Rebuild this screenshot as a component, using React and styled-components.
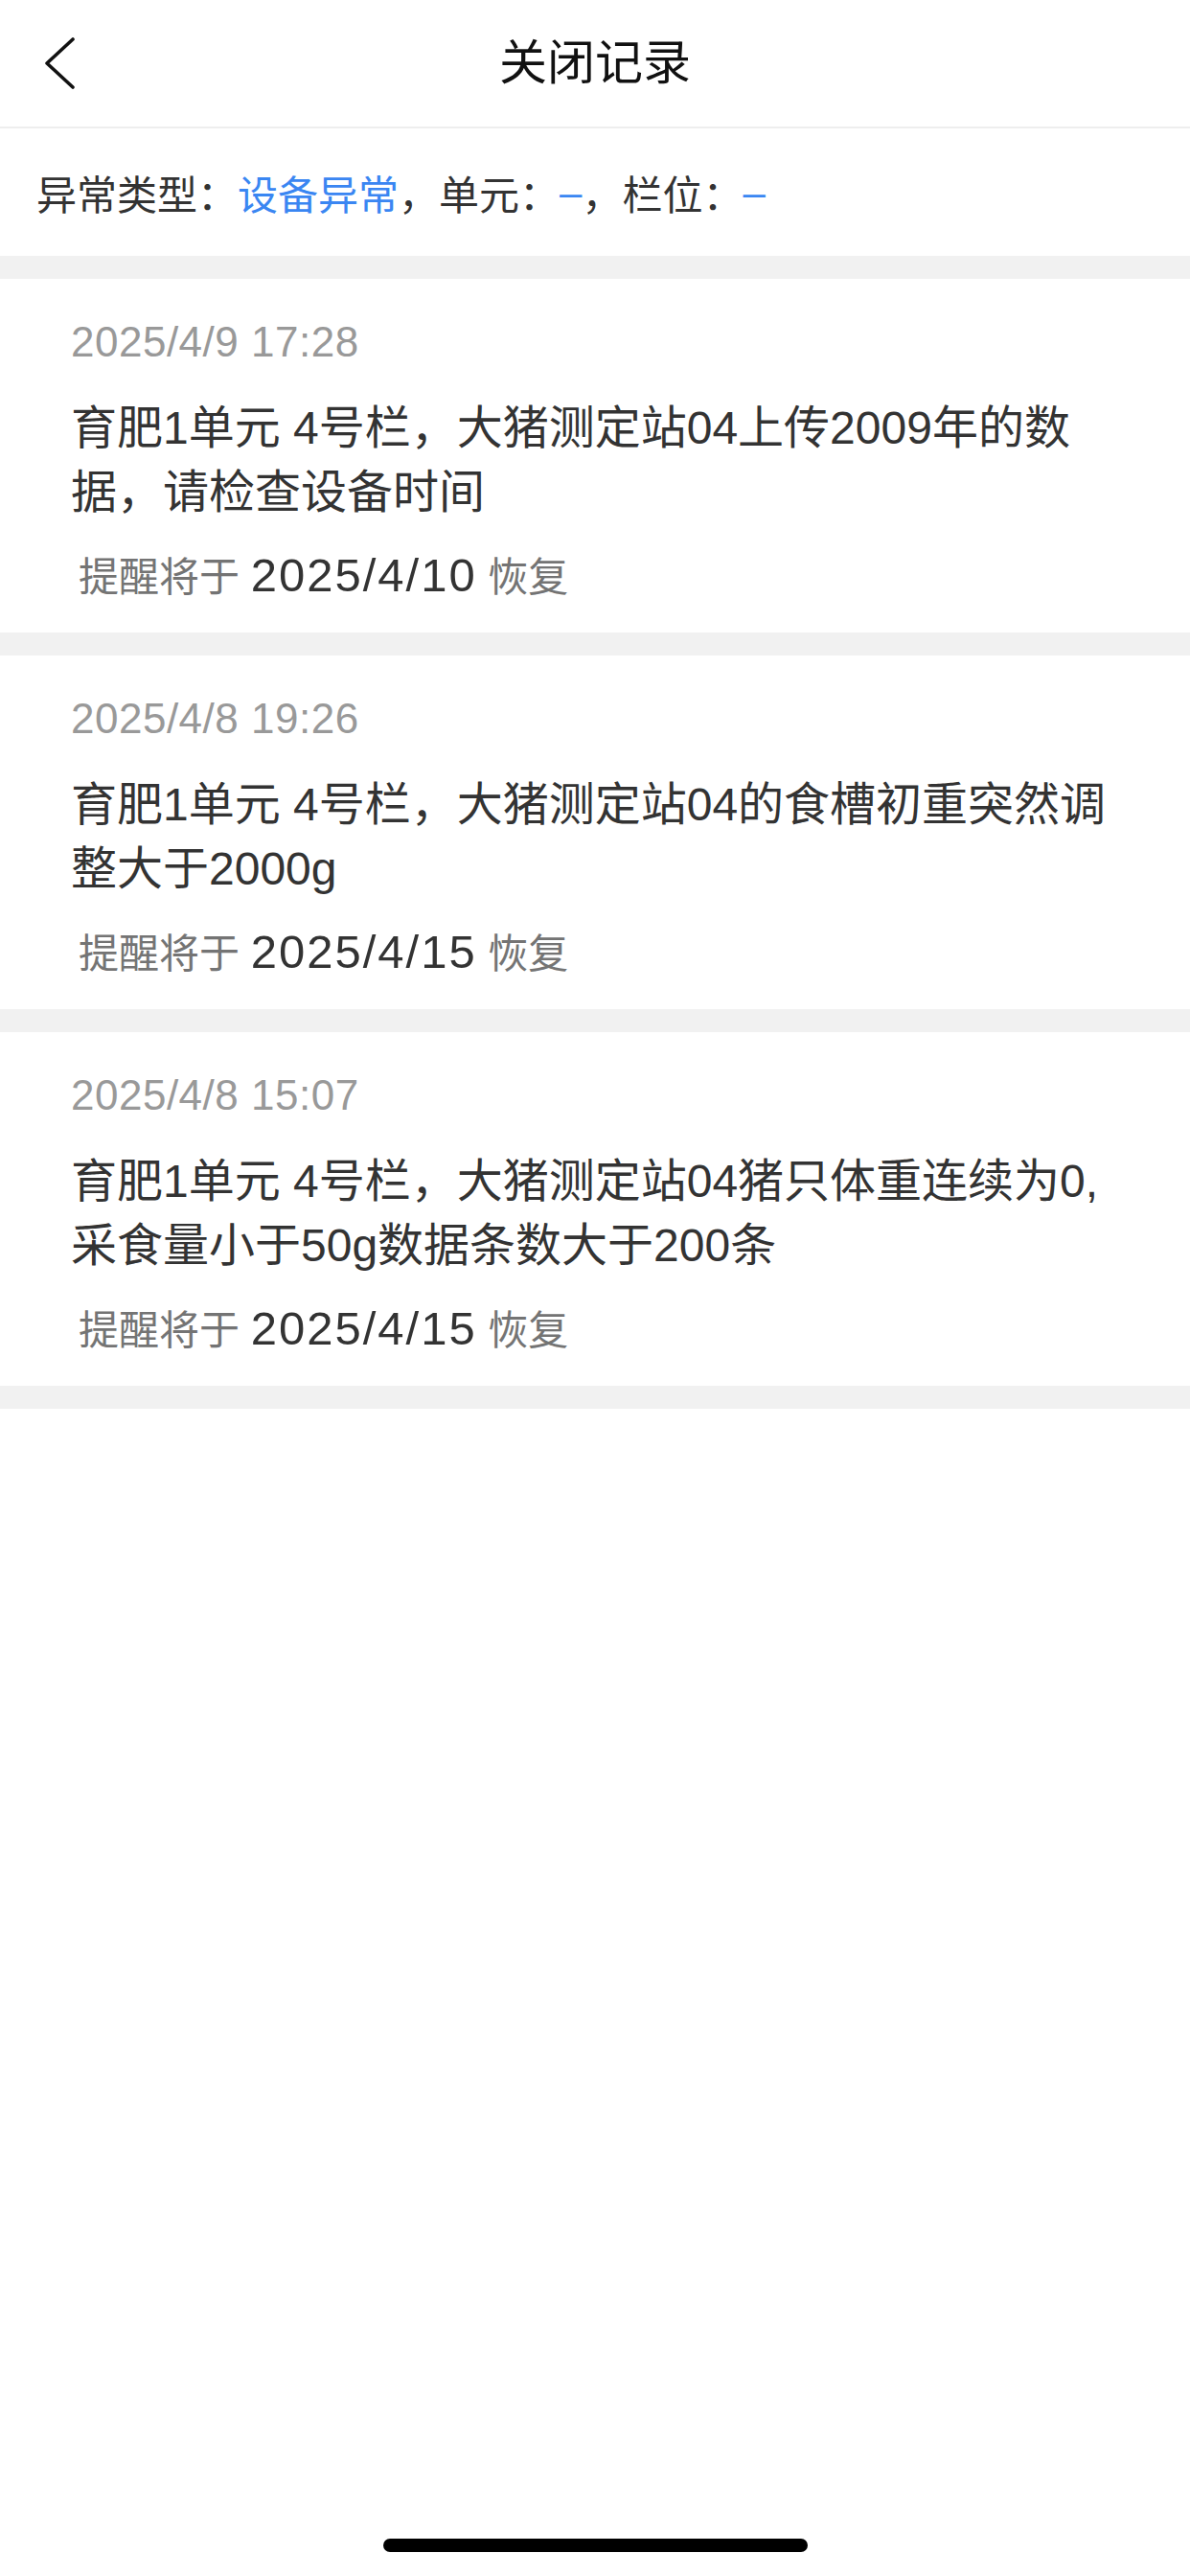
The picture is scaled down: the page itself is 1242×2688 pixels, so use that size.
import React from 'react';
import styled, { createGlobalStyle } from 'styled-components';

const GlobalStyle = createGlobalStyle`
  html, body {
    margin: 0;
    padding: 0;
    background: #ffffff;
  }
  body {
    font-family: "Liberation Sans", "Noto Sans CJK SC", sans-serif;
    color: #333333;
  }
  * {
    box-sizing: border-box;
  }
`;

const Page = styled.div`
  min-height: 100vh;
  display: flex;
  flex-direction: column;
  background: #ffffff;
`;

const NavBar = styled.header`
  height: 134px;
  display: grid;
  grid-template-columns: 1fr auto 1fr;
  align-items: center;
  border-bottom: 2px solid #eeeeee;
`;

const BackButton = styled.button`
  justify-self: start;
  display: flex;
  align-items: center;
  margin: 0 0 0 46px;
  padding: 0;
  border: none;
  background: none;
  cursor: pointer;
`;

const Title = styled.h1`
  margin: 0;
  font-size: 50px;
  line-height: 70px;
  font-weight: 400;
  color: #111111;
`;

const FilterBar = styled.div`
  height: 133px;
  display: flex;
  align-items: center;
  padding-left: 38px;
  font-size: 42px;
  color: #333333;
  white-space: nowrap;
`;

const Highlight = styled.span`
  color: #3a86f2;
`;

const List = styled.div`
  display: flex;
  flex-direction: column;
  gap: 24px;
  padding: 24px 0;
  background: #f1f1f1;
`;

const Card = styled.div`
  background: #ffffff;
  padding: 36px 82px 27px 74px;
`;

const Time = styled.div`
  height: 60px;
  font-size: 44px;
  line-height: 60px;
  letter-spacing: 0.5px;
  color: #999999;
`;

const Message = styled.div`
  margin-top: 26px;
  font-size: 48px;
  line-height: 67px;
  color: #333333;
  word-break: break-all;
`;

const Reminder = styled.div`
  height: 60px;
  margin: 26px 0 0 8px;
  font-size: 42px;
  line-height: 60px;
  color: #747474;
  white-space: nowrap;
`;

const ResumeDate = styled.span`
  font-size: 49px;
  line-height: 1;
  letter-spacing: 2px;
  color: #333333;
`;

const Spacer = styled.div`
  flex: 1;
`;

const HomeArea = styled.div`
  display: flex;
  justify-content: center;
  padding-bottom: 25px;
`;

const HomeIndicator = styled.div`
  width: 443px;
  height: 14px;
  border-radius: 7px;
  background: #000000;
`;

const records = [
  {
    time: '2025/4/9 17:28',
    text: '育肥1单元 4号栏，大猪测定站04上传2009年的数据，请检查设备时间',
    resume: '2025/4/10',
  },
  {
    time: '2025/4/8 19:26',
    text: '育肥1单元 4号栏，大猪测定站04的食槽初重突然调整大于2000g',
    resume: '2025/4/15',
  },
  {
    time: '2025/4/8 15:07',
    text: '育肥1单元 4号栏，大猪测定站04猪只体重连续为0,采食量小于50g数据条数大于200条',
    resume: '2025/4/15',
  },
];

const ChevronLeft = () => (
  <svg width="33" height="54" viewBox="0 0 33 54" fill="none">
    <path d="M30 2 L3 27 L30 52" stroke="#111" strokeWidth="3.6" strokeLinecap="round" strokeLinejoin="round" />
  </svg>
);

const App = () => {
  return (
    <Page>
      <GlobalStyle />
      <NavBar>
        <BackButton aria-label="返回">
          <ChevronLeft />
        </BackButton>
        <Title>关闭记录</Title>
        <div />
      </NavBar>

      <FilterBar>
        异常类型：<Highlight>设备异常</Highlight>，单元：<Highlight>–</Highlight>，栏位：<Highlight>–</Highlight>
      </FilterBar>

      <List>
        {records.map((r) => (
          <Card key={r.time}>
            <Time>{r.time}</Time>
            <Message>{r.text}</Message>
            <Reminder>
              提醒将于 <ResumeDate>{r.resume}</ResumeDate> 恢复
            </Reminder>
          </Card>
        ))}
      </List>

      <Spacer />
      <HomeArea>
        <HomeIndicator />
      </HomeArea>
    </Page>
  );
};

export default App;
